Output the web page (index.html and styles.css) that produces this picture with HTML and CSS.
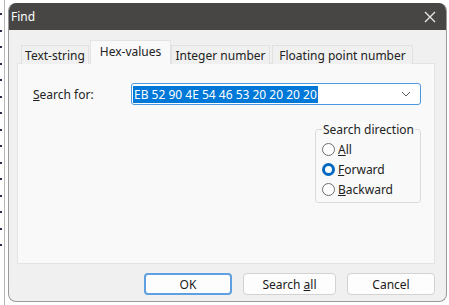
FILE: index.html
```html
<!DOCTYPE html>
<html lang="en">
<head>
    <meta charset="UTF-8">
    <title>Find</title>
    <link rel="stylesheet" href="styles.css">
</head>
<body>
    <div class="backdrop">
        <div class="side">
            <span class="dot"></span><span class="dot"></span><span class="dot"></span><span class="dot"></span>
            <span class="dot"></span><span class="dot"></span><span class="dot"></span><span class="dot"></span>
            <span class="dot"></span><span class="dot"></span><span class="dot"></span><span class="dot"></span>
            <span class="dot"></span><span class="dot"></span><span class="dot"></span>
        </div>
        <div class="dialog">
            <div class="titlebar">
                <span class="title">Find</span>
                <svg class="close" width="12" height="12" viewBox="0 0 12 12">
                    <path d="M1 1 L11 11 M11 1 L1 11" stroke="#e8e8e8" stroke-width="1.3" fill="none"/>
                </svg>
            </div>
            <div class="content">
                <div class="tabs">
                    <div class="tab t1">Text-string</div>
                    <div class="tab t2 selected">Hex-values</div>
                    <div class="tab t3">Integer number</div>
                    <div class="tab t4">Floating point number</div>
                </div>
                <div class="panel">
                    <div class="search-row">
                        <label class="label"><u>S</u>earch for:</label>
                        <div class="combo">
                            <span class="selection">EB 52 90 4E 54 46 53 20 20 20 20</span>
                            <svg class="arrow" width="10" height="6" viewBox="0 0 10 6">
                                <path d="M1 1 L5 5 L9 1" stroke="#606060" stroke-width="1" fill="none"/>
                            </svg>
                        </div>
                    </div>
                    <fieldset class="group">
                        <legend>Search direction</legend>
                        <div class="radio"><span class="circle"></span><u>A</u>ll</div>
                        <div class="radio"><span class="circle checked"></span><u>F</u>orward</div>
                        <div class="radio"><span class="circle"></span><u>B</u>ackward</div>
                    </fieldset>
                </div>
                <div class="buttons">
                    <button class="btn default">OK</button>
                    <button class="btn wide">Search <u>a</u>ll</button>
                    <button class="btn">Cancel</button>
                </div>
            </div>
        </div>
    </div>
</body>
</html>
```

FILE: styles.css
```css
body {
    margin: 0;
    background: #ffffff;
    font-family: "Noto Sans", "Open Sans", sans-serif;
    font-size: 12px;
    color: #1a1a1a;
}
.backdrop {
    display: flex;
    width: 449px;
    height: 305px;
    overflow: hidden;
}
.side {
    width: 4px;
    margin-right: 3px;
    padding-top: 13px;
    border-right: 1px solid #b8b8b8;
    display: flex;
    flex-direction: column;
    gap: 14.5px;
}
.dot {
    display: block;
    width: 2px;
    height: 2px;
    background: #2a2a4a;
}
.dialog {
    margin-top: 3px;
    width: 439px;
    height: 299px;
    background: #f0f0f0;
    border: 1px solid #9a9a9a;
    border-top: none;
    border-radius: 8px;
    overflow: hidden;
    box-sizing: border-box;
}
.titlebar {
    height: 27px;
    background: #474644;
    color: #ffffff;
    display: flex;
    align-items: center;
    justify-content: space-between;
    padding: 0 10px 0 2px;
}
.content {
    padding: 9px 0 0 8px;
}
.tabs {
    display: flex;
    align-items: flex-end;
    padding-left: 4px;
    height: 25px;
}
.tab {
    height: 19px;
    line-height: 19px;
    box-sizing: border-box;
    text-align: center;
    margin-right: 2px;
    background: #f0f0f0;
    border: 1px solid #e1e1e1;
    border-bottom: none;
    color: #222;
}
.t1 { width: 68px; }
.t2 { width: 81px; }
.t3 { width: 99px; }
.t4 { width: 141px; }
.tab.selected {
    height: 24px;
    line-height: 21px;
    background: #f9f9f9;
    margin: 0 0 0 -1px;
    position: relative;
    z-index: 1;
    border-color: #e4e4e4;
}
.panel {
    width: 418px;
    height: 201px;
    box-sizing: border-box;
    margin-top: -1px;
    background: #f9f9f9;
    border: 1px solid #e4e4e4;
    padding: 19px 13px 0 15px;
    display: flex;
    flex-direction: column;
    align-items: flex-end;
}
.search-row {
    display: flex;
    align-items: center;
    justify-content: space-between;
    width: 100%;
}
.label {
    color: #222;
}
.combo {
    width: 290px;
    height: 22px;
    box-sizing: border-box;
    border: 1px solid #4a98e0;
    border-radius: 3px;
    background: #fff;
    display: flex;
    align-items: center;
    justify-content: space-between;
    padding: 0 9px 0 1px;
}
.selection {
    background: #0078d7;
    color: #fff;
    line-height: 17px;
    padding: 0 1px;
}
.group {
    margin: 16px 0 0 0;
    width: 106px;
    height: 82px;
    box-sizing: border-box;
    border: 1px solid #dcdcdc;
    border-radius: 3px;
    padding: 1px 0 0 6px;
}
.group legend {
    padding: 0 1px;
    color: #222;
}
.radio {
    display: flex;
    align-items: center;
    height: 20px;
    color: #222;
}
.circle {
    width: 11px;
    height: 11px;
    border: 1px solid #6e6e6e;
    border-radius: 50%;
    background: #fff;
    margin-right: 3px;
}
.circle.checked {
    width: 7px;
    height: 7px;
    border: 3px solid #0067c0;
    background: #fff;
}
.buttons {
    display: flex;
    justify-content: flex-end;
    gap: 11px;
    margin-top: 9px;
    padding-right: 11px;
}
.btn {
    width: 88px;
    height: 22px;
    font-family: inherit;
    font-size: 12px;
    color: #1a1a1a;
    background: #fdfdfd;
    border: 1px solid #d2d2d2;
    border-radius: 4px;
    padding: 0;
}
.btn.wide {
    width: 93px;
}
.btn.default {
    border: 2px solid #5fa0e0;
}
```
